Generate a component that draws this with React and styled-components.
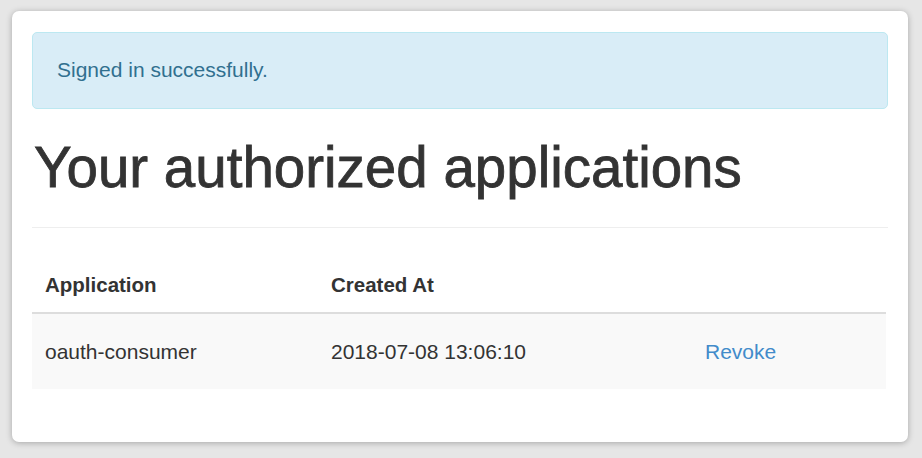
import styled, { createGlobalStyle } from 'styled-components';

const GlobalStyle = createGlobalStyle`
	html, body {
		margin: 0;
		padding: 0;
		background: #e6e6e6;
	}
	body {
		font-family: "Liberation Sans", Arial, Helvetica, sans-serif;
		color: #333;
	}
`;

const Page = styled.div`
	padding: 11px 14px 16px 12px;
`;

const Card = styled.div`
	width: 896px;
	box-sizing: border-box;
	background: #fff;
	border-radius: 7px;
	box-shadow: 0 1px 6px rgba(0, 0, 0, 0.28);
	padding: 21px 20px 20px;
`;

const Alert = styled.div`
	background: #d9edf7;
	border: 1px solid #bce8f1;
	border-radius: 5px;
	color: #31708f;
	font-size: 21px;
	line-height: 28px;
	padding: 23px 24px 24px;
`;

const Title = styled.h1`
	margin: 28px 0 28px 2px;
	font-size: 56.5px;
	line-height: 62px;
	font-weight: normal;
	-webkit-text-stroke: 0.8px #333;
	color: #333;
`;

const Divider = styled.hr`
	margin: 0;
	border: 0;
	border-top: 1px solid #eee;
`;

const Table = styled.table`
	width: 854px;
	margin: 30px 0 33px;
	border-collapse: collapse;
	table-layout: fixed;
	font-size: 21px;
	line-height: 28px;
`;

const Th = styled.th`
	box-sizing: border-box;
	text-align: left;
	font-weight: bold;
	font-size: 20.5px;
	padding: 13px 13px;
	border-bottom: 2px solid #ddd;
	width: ${p => (p.$width ? `${p.$width}px` : 'auto')};
`;

const Row = styled.tr`
	background: ${p => (p.$striped ? '#f9f9f9' : '#fff')};
`;

const Td = styled.td`
	padding: 24px 13px 23px;
	white-space: nowrap;
`;

const Link = styled.a`
	color: #428bca;
	text-decoration: none;
	cursor: pointer;
`;

const apps = [{ id: 1, name: 'oauth-consumer', createdAt: '2018-07-08 13:06:10' }];

export default function App() {
	return (
		<>
			<GlobalStyle />
			<Page>
				<Card>
					<Alert>Signed in successfully.</Alert>
					<Title>Your authorized applications</Title>
					<Divider />
					<Table>
						<thead>
							<tr>
								<Th $width={286}>Application</Th>
								<Th $width={374}>Created At</Th>
								<Th></Th>
							</tr>
						</thead>
						<tbody>
							{apps.map((app, i) => (
								<Row key={app.id} $striped={i % 2 === 0}>
									<Td>{app.name}</Td>
									<Td>{app.createdAt}</Td>
									<Td>
										<Link>Revoke</Link>
									</Td>
								</Row>
							))}
						</tbody>
					</Table>
				</Card>
			</Page>
		</>
	);
}
